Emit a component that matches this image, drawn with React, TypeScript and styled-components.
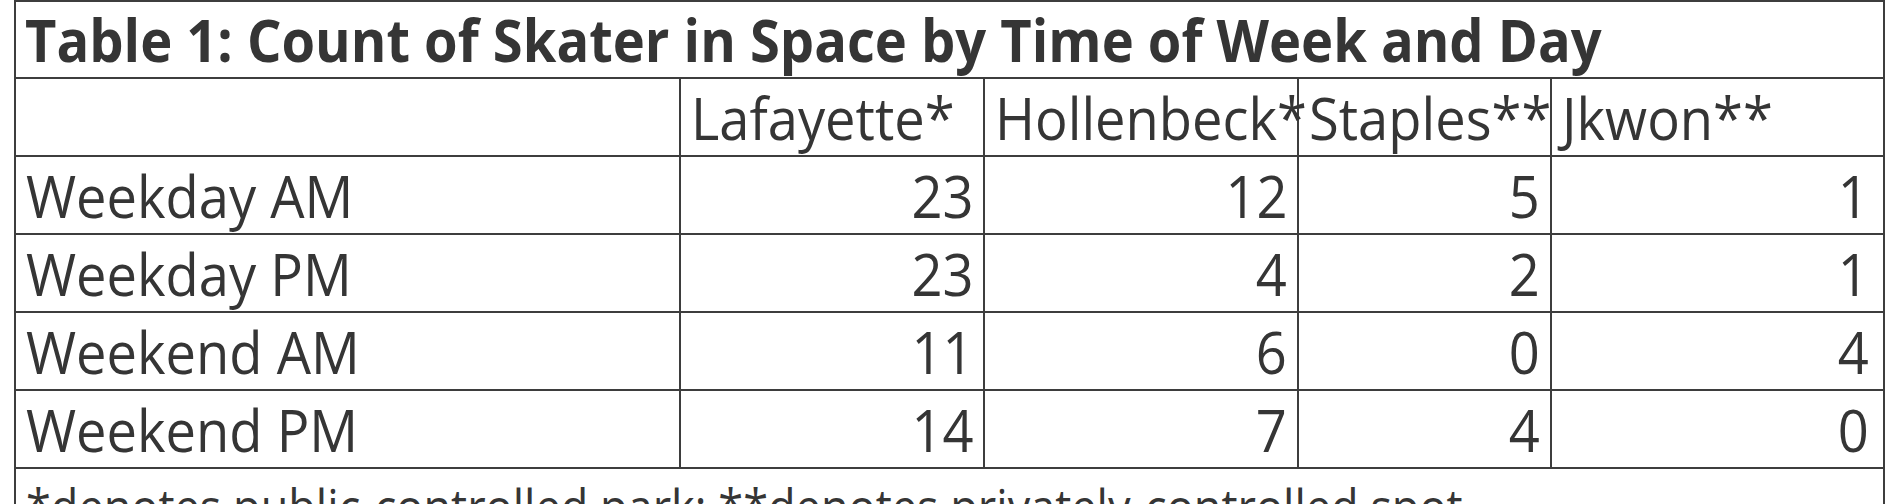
import React from 'react';
import styled, { createGlobalStyle } from 'styled-components';

const GlobalStyle = createGlobalStyle`
	html, body {
		margin: 0;
		padding: 0;
		background: #fff;
	}
	body {
		font-family: "Open Sans", "Noto Sans", "Liberation Sans", sans-serif;
		color: #333;
	}
`;

const LINE = '#3d3d3d';

const Frame = styled.div`
	width: 1867px;
	margin-left: 14px;
	border: 2px solid ${LINE};
	border-bottom: none;
	box-sizing: content-box;
	color: #353535;
`;

// Myriad-like narrow letters: squeeze the text horizontally
const Text = styled.span<{ $end?: boolean }>`
	display: inline-block;
	transform: scaleX(0.92);
	transform-origin: ${p => (p.$end ? 'right' : 'left')} bottom;
	position: relative;
	z-index: 1;
`;

const TitleRow = styled.div`
	height: 77px;
	box-sizing: border-box;
	border-bottom: 2px solid ${LINE};
	display: flex;
	align-items: flex-end;
	padding: 0 0 8px 9px;
	font-size: 59px;
	font-weight: 700;
	line-height: 1;
	white-space: nowrap;
`;

const Row = styled.div`
	display: grid;
	grid-template-columns: 665px 304px 314px 253px 327px;
	height: 78px;
	box-sizing: border-box;
	border-bottom: 2px solid ${LINE};
`;

const Cell = styled.div<{ $num?: boolean }>`
	display: flex;
	align-items: flex-end;
	justify-content: ${p => (p.$num ? 'flex-end' : 'flex-start')};
	padding: ${p => (p.$num ? '0 10px 8px 0' : '0 0 8px 10px')};
	box-sizing: border-box;
	border-right: 2px solid ${LINE};
	font-size: 59px;
	line-height: 1;
	white-space: nowrap;
	overflow: visible;

	&:last-child {
		border-right: none;
	}
`;

const Note = styled.div`
	height: 35px;
	overflow: hidden;
	padding: 13px 0 0 10px;
	box-sizing: border-box;
	font-size: 49px;
	line-height: 1;
	white-space: nowrap;
`;

const parks = ['Lafayette*', 'Hollenbeck*', 'Staples**', 'Jkwon**'];

const rows: [string, number[]][] = [
	['Weekday AM', [23, 12, 5, 1]],
	['Weekday PM', [23, 4, 2, 1]],
	['Weekend AM', [11, 6, 0, 4]],
	['Weekend PM', [14, 7, 4, 0]],
];

export default function App() {
	return (
		<>
			<GlobalStyle />
			<Frame>
				<TitleRow>
					<Text>Table 1: Count of Skater in Space by Time of Week and Day</Text>
				</TitleRow>
				<Row>
					<Cell />
					{parks.map(name => (
						<Cell key={name}>
							<Text>{name}</Text>
						</Cell>
					))}
				</Row>
				{rows.map(([label, counts]) => (
					<Row key={label}>
						<Cell>
							<Text>{label}</Text>
						</Cell>
						{counts.map((n, i) => (
							<Cell $num key={i}>
								<Text $end>{n}</Text>
							</Cell>
						))}
					</Row>
				))}
				<Note>
					<Text>*denotes public-controlled park; **denotes privately-controlled spot</Text>
				</Note>
			</Frame>
		</>
	);
}
